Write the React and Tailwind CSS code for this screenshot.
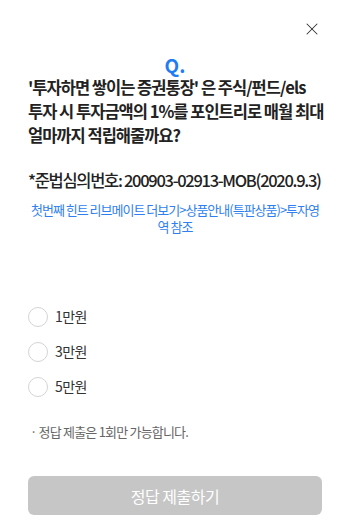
import { X } from 'lucide-react'

const options = ['1만원', '3만원', '5만원']

export default function App() {
  return (
    <div
      className="w-[350px] h-[522px] bg-white px-[28px] text-[#222]"
      style={{ fontFamily: '"Noto Sans CJK KR", "Noto Sans", sans-serif' }}
    >
      <div className="flex justify-end pt-[19px]">
        <X size={20} strokeWidth={1.25} className="text-[#333]" />
      </div>

      <p className="mt-[16px] text-center text-[19px] leading-[20px] font-bold text-[#1f7cf2]">Q.</p>

      <p className="text-[16.5px] leading-[24px] font-bold tracking-[-1px] text-[#222] whitespace-nowrap">
        '투자하면 쌓이는 증권통장' 은 주식/펀드/els<br />
        투자 시 투자금액의 1%를 포인트리로 매월 최대<br />
        얼마까지 적립해줄까요?
      </p>

      <p className="mt-[21px] text-[16.5px] leading-[24px] font-medium tracking-[-1.3px] whitespace-nowrap">
        *준법심의번호: 200903-02913-MOB(2020.9.3)
      </p>

      <p className="mt-[9px] text-center text-[13px] leading-[17px] text-[#2f7ff0] tracking-[-1px] whitespace-nowrap">
        첫번째 힌트 리브메이트 더보기&gt;상품안내(특판상품)&gt;투자영<br />
        역 참조
      </p>

      <div className="mt-[64px] flex flex-col">
        {options.map(o => (
          <label key={o} className="flex items-center h-[35px] gap-[7px]">
            <span className="w-[20px] h-[20px] rounded-full border border-[#d4d4d4] bg-white shrink-0" />
            <span className="text-[14px] text-[#333] tracking-[-0.6px]">{o}</span>
          </label>
        ))}
      </div>

      <p className="mt-[19px] pl-[2px] text-[13px] leading-[18px] text-[#666] tracking-[-0.8px]">
        · 정답 제출은 1회만 가능합니다.
      </p>

      <button className="mt-[35px] w-full h-[39px] rounded-[6px] bg-[#c6c6c6] text-white text-[16px] tracking-[-0.5px]">
        정답 제출하기
      </button>
    </div>
  )
}
